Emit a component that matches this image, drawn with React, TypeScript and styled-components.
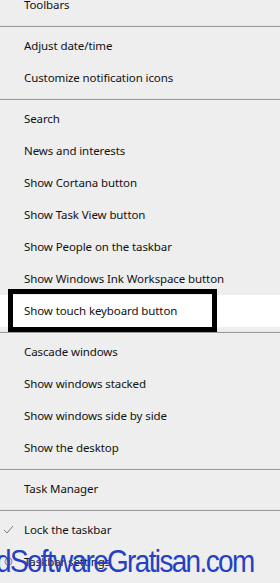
import React from 'react';
import styled, { createGlobalStyle } from 'styled-components';

const GlobalStyle = createGlobalStyle`
    html, body {
        margin: 0;
        padding: 0;
        background: #eeeeee;
        overflow: hidden;
    }
`;

const Screen = styled.div`
    position: relative;
    width: 280px;
    height: 583px;
    overflow: hidden;
    background: #eeeeee;
    font-family: "Noto Sans", "Open Sans", sans-serif;
`;

const Menu = styled.div`
    display: flex;
    flex-direction: column;
    margin-top: -11px;
`;

const Row = styled.div<{ active?: boolean }>`
    position: relative;
    display: flex;
    align-items: center;
    height: 32px;
    padding-bottom: 1px;
    box-sizing: border-box;
    background: ${(p) => (p.active ? '#ffffff' : 'transparent')};
    font-size: 11.5px;
    letter-spacing: -0.1px;
    color: #111111;
    white-space: nowrap;
`;

const IconSlot = styled.span`
    flex: 0 0 24px;
    display: flex;
    align-items: center;
    padding-left: 3px;
    box-sizing: border-box;
    color: #7a7a7a;
`;

const Separator = styled.div`
    height: 9px;
    display: flex;
    flex-direction: column;
    justify-content: center;
    &::before {
        content: '';
        display: block;
        height: 1px;
        background: #e6e6e6;
    }
    &::after {
        content: '';
        display: block;
        height: 1px;
        background: #9a9a9a;
    }
`;

const Callout = styled.div`
    position: absolute;
    left: 8px;
    top: -6px;
    width: 209px;
    height: 43px;
    box-sizing: border-box;
    border: 5px solid #000000;
    pointer-events: none;
`;

const Watermark = styled.div`
    position: absolute;
    left: -4px;
    top: 544px;
    font-family: "Liberation Sans", Arial, sans-serif;
    font-size: 31px;
    line-height: 36px;
    letter-spacing: -1.8px;
    color: #2440c4;
    white-space: nowrap;
    transform: scaleX(0.9);
    transform-origin: left center;
    pointer-events: none;
`;

const CheckIcon = () => (
    <svg width="11" height="11" viewBox="0 0 11 11" fill="none">
        <path d="M1 6 L4 9 L10 2" stroke="currentColor" strokeWidth="1" />
    </svg>
);

const GearIcon = () => (
    <svg width="11" height="11" viewBox="0 0 11 11" fill="none">
        <circle cx="5.5" cy="5.5" r="3.5" stroke="currentColor" strokeWidth="1" />
        <circle cx="5.5" cy="5.5" r="1.3" stroke="currentColor" strokeWidth="1" />
    </svg>
);

type Item = { label: string; icon?: 'check' | 'gear'; active?: boolean };

const sections: Item[][] = [
    [{ label: 'Toolbars' }],
    [{ label: 'Adjust date/time' }, { label: 'Customize notification icons' }],
    [
        { label: 'Search' },
        { label: 'News and interests' },
        { label: 'Show Cortana button' },
        { label: 'Show Task View button' },
        { label: 'Show People on the taskbar' },
        { label: 'Show Windows Ink Workspace button' },
        { label: 'Show touch keyboard button', active: true },
    ],
    [
        { label: 'Cascade windows' },
        { label: 'Show windows stacked' },
        { label: 'Show windows side by side' },
        { label: 'Show the desktop' },
    ],
    [{ label: 'Task Manager' }],
    [{ label: 'Lock the taskbar', icon: 'check' }, { label: 'Taskbar settings', icon: 'gear' }],
];

const App: React.FC = () => (
    <>
        <GlobalStyle />
        <Screen>
            <Menu>
                {sections.map((items, si) => (
                    <React.Fragment key={si}>
                        {si > 0 && <Separator />}
                        {items.map((item) => (
                            <Row key={item.label} active={item.active}>
                                <IconSlot>
                                    {item.icon === 'check' && <CheckIcon />}
                                    {item.icon === 'gear' && <GearIcon />}
                                </IconSlot>
                                {item.label}
                                {item.active && <Callout />}
                            </Row>
                        ))}
                    </React.Fragment>
                ))}
            </Menu>
            <Watermark>dSoftwareGratisan.com</Watermark>
        </Screen>
    </>
);

export default App;
